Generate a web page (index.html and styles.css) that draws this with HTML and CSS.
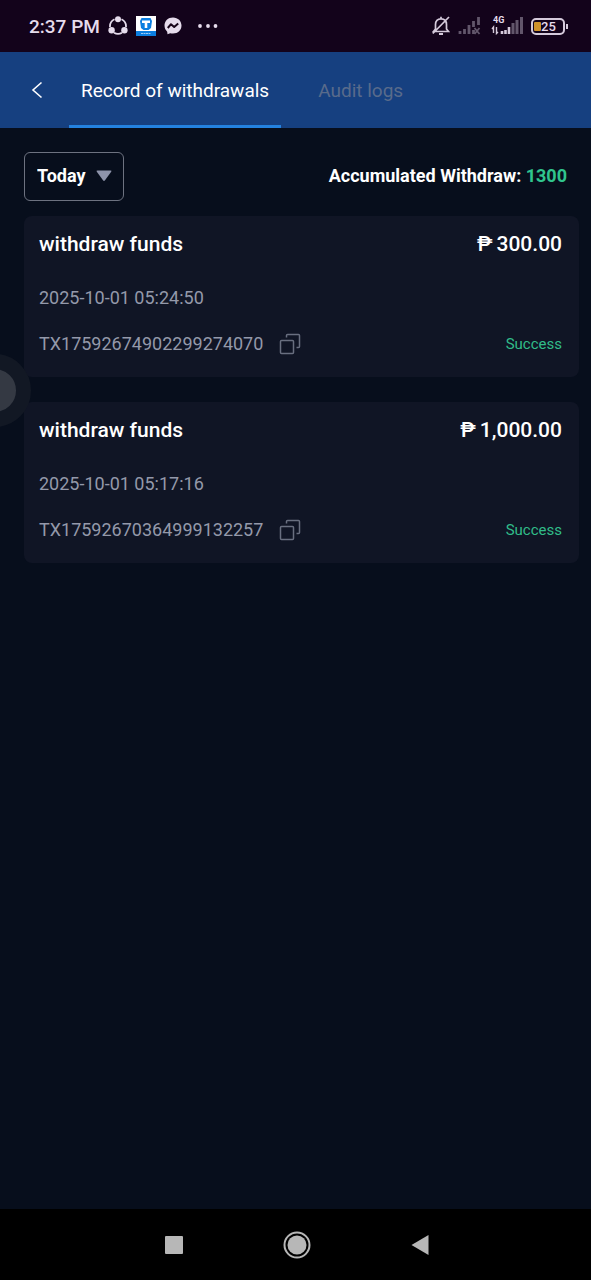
FILE: index.html
```html
<!DOCTYPE html>
<html lang="en">
<head>
<meta charset="utf-8">
<meta name="viewport" content="width=device-width, initial-scale=1">
<title>Record of withdrawals</title>
<link rel="stylesheet" href="styles.css">
</head>
<body>
<div class="status-bar">
  <div class="status-left">
    <span class="clock">2:37 PM</span>
    <svg width="20" height="20" viewBox="0 0 20 20" fill="none" stroke="#e6dcec" stroke-width="1.800"><path d="M6.500 3.200A8 8 0 0 0 2 11M13.500 3.200A8 8 0 0 1 18 11M6 16.800a8 8 0 0 0 8 0"/><g fill="#e6dcec" stroke="none"><circle cx="10" cy="3.200" r="3"/><circle cx="3.600" cy="14.200" r="3.200"/><circle cx="16.400" cy="14.200" r="3.200"/></g></svg>
    <svg width="20" height="20" viewBox="0 0 20 20"><path fill="#fff" d="M0 0h20v15H0z"/><path fill="#0b7ee0" d="M0 15h20v5H0zM5.500 2h9L16 5l-1 7-2.500 2h-5L5 12 4 5z"/><path fill="#fff" d="M6 4.500h8v2.500h-2.700v5H8.700V7H6z"/><path stroke="#9ccbf5" d="M5 17.500h10" stroke-dasharray="2 .5"/></svg>
    <svg class="i-msg" width="18" height="18" viewBox="0 0 18 18"><path fill="#e6dcec" d="M9 .5C4 .5.500 4 .5 8.600c0 2.500 1 4.600 2.700 6.100l.3 2.600 2.700-1.100c.9.2 1.800.4 2.800.4 5 0 8.500-3.500 8.500-8S14 .5 9 .5z"/><path fill="none" stroke="#170519" stroke-width="2" stroke-linejoin="round" d="M3.800 11 7 7.200l3.200 2.800 4-3.500"/></svg>
    <svg width="20" height="4" viewBox="0 0 20 4" fill="#e6dcec"><circle cx="2" cy="2" r="1.900"/><circle cx="10" cy="2" r="1.900"/><circle cx="17.500" cy="2" r="1.900"/></svg>
  </div>
  <div class="status-right">
    <svg width="18" height="20" viewBox="0 0 18 20" fill="none" stroke="#d5cadb" stroke-width="1.700"><path d="M3.500 13V8.500C3.500 5 5.500 2.800 9 2.800s5.500 2.200 5.500 5.700V13l2 2.500h-15zM9 .8v2M17 1 .8 17.500"/><path d="M7 18h4" stroke-width="2"/></svg>
    <svg width="23" height="18" viewBox="0 0 23 18" stroke="#62566b" stroke-width="2.800"><path d="M2 17v-3M6.500 17v-5M11 17V8M15.500 10V4M15.500 17v-4M20.500 8V0"/><path stroke-width="1.800" d="m16.500 11 5 6m0-6-5 6"/></svg>
    <div class="mobile">
      <span class="net">4G</span>
      <svg width="32" height="18" viewBox="0 0 32 18" stroke="#d5cadb" stroke-width="2.600"><path stroke-width="1.400" fill="none" d="M2.500 16v-6L1 12M5.500 10v6.500L7 15"/><path d="M11 17v-3M14.500 17v-4M18 17v-7"/><path stroke="#62566b" stroke-width="3" d="M22 17V6M26 17V3M30.500 17V0"/></svg>
    </div>
    <div class="battery"><span class="charge"></span><span class="level">25</span></div>
  </div>
</div>

<header class="topbar">
  <button class="back" type="button" aria-label="Back"><svg width="12" height="18" viewBox="0 0 12 18" fill="none" stroke="#fff" stroke-width="1.600"><path d="M10.500 1.500 2 9l8.500 7.500"/></svg></button>
  <nav class="tabs">
    <button class="tab tab-active" type="button">Record of withdrawals</button>
    <button class="tab" type="button">Audit logs</button>
  </nav>
</header>

<main class="content">
  <div class="filters">
    <div class="period">
      <select class="period-select" aria-label="Period"><option>Today</option></select>
      <svg class="period-arrow" width="16" height="12" viewBox="0 0 16 12"><path fill="#8e94ab" d="M1.500.5h13q1.500 0 .7 1.300L9 10.300q-1 1.200-2 0L.800 1.800Q0 .5 1.500.5z"/></svg>
    </div>
    <p class="total">Accumulated Withdraw: <span class="total-value">1300</span></p>
  </div>

  <article class="card">
    <div class="row">
      <h2 class="title">withdraw funds</h2>
      <p class="amount"><span class="peso">₱</span><span>300.00</span></p>
    </div>
    <time class="date">2025-10-01 05:24:50</time>
    <div class="row">
      <div class="tx"><span>TX17592674902299274070</span>
        <button class="copy" type="button" aria-label="Copy"><svg width="22" height="22" viewBox="0 0 22 22" fill="none" stroke="#696f80" stroke-width="1.500"><rect x="1.500" y="7.500" width="13" height="13" rx="1"/><path d="M7.500 4.500v-2q0-1 1-1h11q1 0 1 1v11q0 1-1 1h-2"/></svg></button>
      </div>
      <span class="state">Success</span>
    </div>
  </article>

  <article class="card">
    <div class="row">
      <h2 class="title">withdraw funds</h2>
      <p class="amount"><span class="peso">₱</span><span>1,000.00</span></p>
    </div>
    <time class="date">2025-10-01 05:17:16</time>
    <div class="row">
      <div class="tx"><span>TX17592670364999132257</span>
        <button class="copy" type="button" aria-label="Copy"><svg width="22" height="22" viewBox="0 0 22 22" fill="none" stroke="#696f80" stroke-width="1.500"><rect x="1.500" y="7.500" width="13" height="13" rx="1"/><path d="M7.500 4.500v-2q0-1 1-1h11q1 0 1 1v11q0 1-1 1h-2"/></svg></button>
      </div>
      <span class="state">Success</span>
    </div>
  </article>
</main>

<button class="assist" type="button" aria-label="Quick menu"></button>

<nav class="system-nav">
  <button type="button" aria-label="Recent apps"><svg width="18" height="18" viewBox="0 0 18 18"><rect width="18" height="18" rx="1" fill="#b7b7b7"/></svg></button>
  <button type="button" aria-label="Home"><svg width="28" height="28" viewBox="0 0 28 28"><circle cx="14" cy="14" r="12.500" fill="none" stroke="#b7b7b7" stroke-width="2"/><circle cx="14" cy="14" r="9.500" fill="#b7b7b7"/></svg></button>
  <button type="button" aria-label="Back"><svg width="18" height="20" viewBox="0 0 18 20"><path fill="#b7b7b7" d="M17.500 0v20L.5 10z"/></svg></button>
</nav>
</body>
</html>
```
FILE: styles.css
```css
* { box-sizing: border-box; }

body {
  margin: 0;
  min-height: 100vh;
  display: flex;
  flex-direction: column;
  background: #070e1c;
  color: #fff;
  font-family: Roboto, "Liberation Sans", sans-serif;
}

h2, p { margin: 0; }

button {
  padding: 0;
  border: 0;
  background: none;
  color: inherit;
  font: inherit;
}

svg { display: block; flex: none; }

.status-bar {
  height: 52px;
  padding: 0 26px 0 29px;
  display: flex;
  align-items: center;
  justify-content: space-between;
  background: #13031b;
  color: #e6dcec;
}

.status-left { display: flex; align-items: center; gap: 8px; }
.clock { font-size: 19px; font-weight: 500; }
.i-msg { margin-right: 8px; }

.status-right { display: flex; align-items: center; gap: 8px; }
.mobile { position: relative; margin-left: 2px; }

.net {
  position: absolute;
  left: 2px;
  top: -2px;
  font-size: 9px;
  line-height: 10px;
  font-weight: 700;
}

.battery {
  position: relative;
  width: 34px;
  height: 17px;
  padding: 1px;
  display: flex;
  align-items: center;
  border: 2px solid #d5cadb;
  border-radius: 5px;
}

.battery::after {
  content: "";
  position: absolute;
  right: -5px;
  top: 4px;
  width: 2px;
  height: 5px;
  background: #d5cadb;
}

.charge { width: 7px; height: 9px; border-radius: 1px; background: #cf922b; }
.level { font-size: 13px; line-height: 13px; font-weight: 500; }

.topbar {
  height: 76px;
  display: flex;
  background: #164080;
}

.back { width: 69px; padding-left: 31px; }
.tabs { display: flex; gap: 25px; }

.tab {
  padding: 0 12px;
  border-top: 3px solid transparent;
  border-bottom: 3px solid transparent;
  font-size: 19px;
  color: #596b8b;
}

.tab-active { color: #fff; border-bottom-color: #2482df; }

.content {
  flex: 1;
  padding: 24px 12px 24px 24px;
  display: flex;
  flex-direction: column;
}

.filters {
  margin-bottom: 15px;
  padding-right: 12px;
  display: flex;
  align-items: center;
  justify-content: space-between;
}

.period { position: relative; }

.period-select {
  display: block;
  appearance: none;
  width: 100px;
  height: 49px;
  padding: 0 12px 2px;
  border: 1px solid #6d7280;
  border-radius: 6px;
  background: transparent;
  color: #fff;
  font: 700 18px Roboto, "Liberation Sans", sans-serif;
}

.period-arrow {
  position: absolute;
  right: 12px;
  top: 18px;
  pointer-events: none;
}

.total { padding-bottom: 2px; font-size: 18px; font-weight: 700; }
.total-value { color: #30c48d; }

.card {
  margin-bottom: 25px;
  padding: 14px 17px 20px 15px;
  border-radius: 8px;
  background: #101525;
}

.row { display: flex; align-items: center; justify-content: space-between; }
.title, .amount { font-size: 21px; line-height: 28px; font-weight: 500; }
.amount { display: flex; gap: 4px; }

.date {
  display: block;
  margin: 28px 0 20px;
  font-size: 18px;
  line-height: 24px;
  color: #9499aa;
}

.tx {
  display: flex;
  align-items: center;
  gap: 16px;
  font-size: 18px;
  line-height: 27px;
  color: #9499aa;
}

.state { font-size: 15px; color: #30bc89; }

.assist {
  position: absolute;
  left: -42px;
  top: 354px;
  width: 73px;
  height: 73px;
  border: 15px solid #121824;
  border-radius: 50%;
  background: #343943;
}

.system-nav {
  height: 71px;
  padding-left: 2px;
  display: flex;
  align-items: center;
  justify-content: center;
  gap: 100px;
  background: #000;
}
```
